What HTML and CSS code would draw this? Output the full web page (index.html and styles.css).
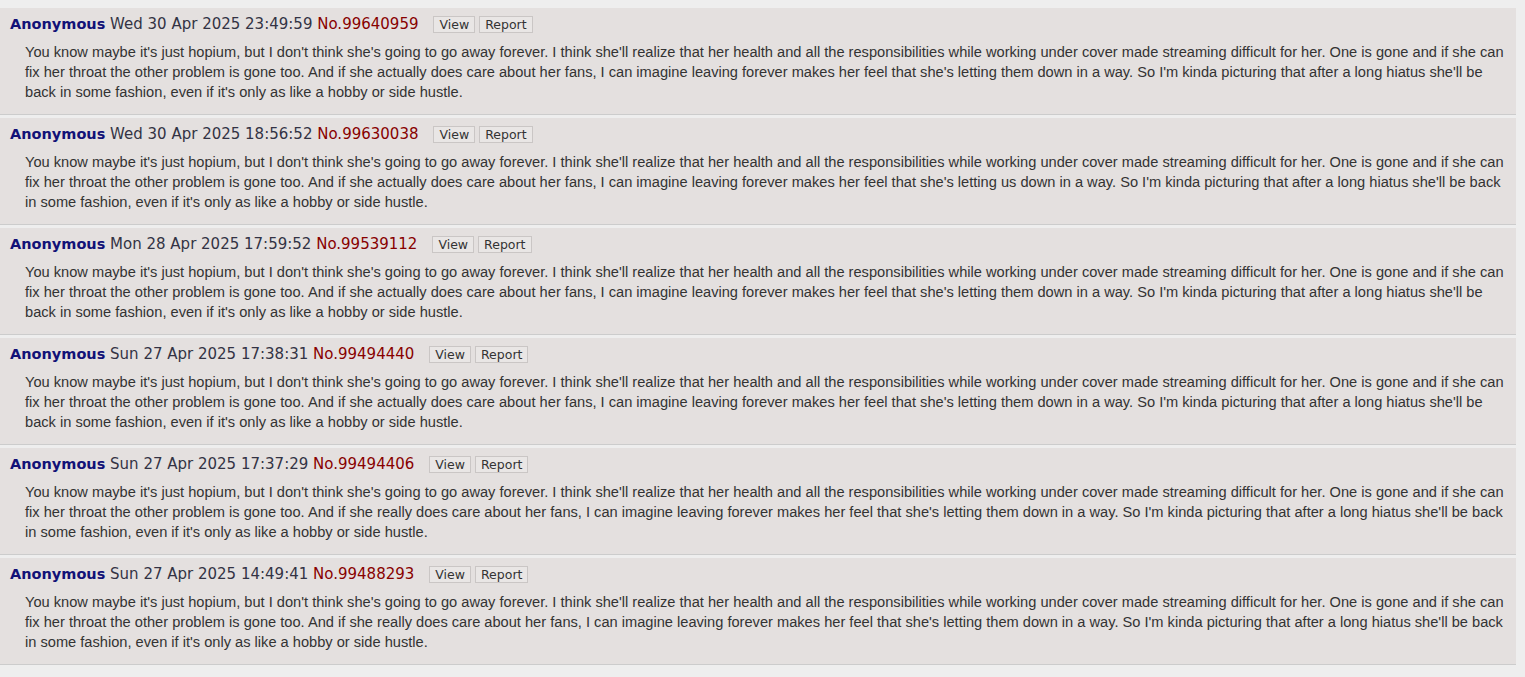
FILE: index.html
```html
<!DOCTYPE html>
<html>
<head>
<meta charset="utf-8">
<link rel="stylesheet" href="styles.css">
</head>
<body>
<div class="posts">
  <article class="post">
    <div class="post-head"><span class="name">Anonymous</span> <span class="date">Wed 30 Apr 2025 23:49:59</span> <span class="num">No.99640959</span><span class="btns"><span class="btn">View</span><span class="btn">Report</span></span></div>
    <div class="post-body">You know maybe it's just hopium, but I don't think she's going to go away forever. I think she'll realize that her health and all the responsibilities while working under cover made streaming difficult for her. One is gone and if she can fix her throat the other problem is gone too. And if she actually does care about her fans, I can imagine leaving forever makes her feel that she's letting them down in a way. So I'm kinda picturing that after a long hiatus she'll be back in some fashion, even if it's only as like a hobby or side hustle.</div>
  </article>
  <article class="post">
    <div class="post-head"><span class="name">Anonymous</span> <span class="date">Wed 30 Apr 2025 18:56:52</span> <span class="num">No.99630038</span><span class="btns"><span class="btn">View</span><span class="btn">Report</span></span></div>
    <div class="post-body">You know maybe it's just hopium, but I don't think she's going to go away forever. I think she'll realize that her health and all the responsibilities while working under cover made streaming difficult for her. One is gone and if she can fix her throat the other problem is gone too. And if she actually does care about her fans, I can imagine leaving forever makes her feel that she's letting us down in a way. So I'm kinda picturing that after a long hiatus she'll be back in some fashion, even if it's only as like a hobby or side hustle.</div>
  </article>
  <article class="post">
    <div class="post-head"><span class="name">Anonymous</span> <span class="date">Mon 28 Apr 2025 17:59:52</span> <span class="num">No.99539112</span><span class="btns"><span class="btn">View</span><span class="btn">Report</span></span></div>
    <div class="post-body">You know maybe it's just hopium, but I don't think she's going to go away forever. I think she'll realize that her health and all the responsibilities while working under cover made streaming difficult for her. One is gone and if she can fix her throat the other problem is gone too. And if she actually does care about her fans, I can imagine leaving forever makes her feel that she's letting them down in a way. So I'm kinda picturing that after a long hiatus she'll be back in some fashion, even if it's only as like a hobby or side hustle.</div>
  </article>
  <article class="post">
    <div class="post-head"><span class="name">Anonymous</span> <span class="date">Sun 27 Apr 2025 17:38:31</span> <span class="num">No.99494440</span><span class="btns"><span class="btn">View</span><span class="btn">Report</span></span></div>
    <div class="post-body">You know maybe it's just hopium, but I don't think she's going to go away forever. I think she'll realize that her health and all the responsibilities while working under cover made streaming difficult for her. One is gone and if she can fix her throat the other problem is gone too. And if she actually does care about her fans, I can imagine leaving forever makes her feel that she's letting them down in a way. So I'm kinda picturing that after a long hiatus she'll be back in some fashion, even if it's only as like a hobby or side hustle.</div>
  </article>
  <article class="post">
    <div class="post-head"><span class="name">Anonymous</span> <span class="date">Sun 27 Apr 2025 17:37:29</span> <span class="num">No.99494406</span><span class="btns"><span class="btn">View</span><span class="btn">Report</span></span></div>
    <div class="post-body">You know maybe it's just hopium, but I don't think she's going to go away forever. I think she'll realize that her health and all the responsibilities while working under cover made streaming difficult for her. One is gone and if she can fix her throat the other problem is gone too. And if she really does care about her fans, I can imagine leaving forever makes her feel that she's letting them down in a way. So I'm kinda picturing that after a long hiatus she'll be back in some fashion, even if it's only as like a hobby or side hustle.</div>
  </article>
  <article class="post">
    <div class="post-head"><span class="name">Anonymous</span> <span class="date">Sun 27 Apr 2025 14:49:41</span> <span class="num">No.99488293</span><span class="btns"><span class="btn">View</span><span class="btn">Report</span></span></div>
    <div class="post-body">You know maybe it's just hopium, but I don't think she's going to go away forever. I think she'll realize that her health and all the responsibilities while working under cover made streaming difficult for her. One is gone and if she can fix her throat the other problem is gone too. And if she really does care about her fans, I can imagine leaving forever makes her feel that she's letting them down in a way. So I'm kinda picturing that after a long hiatus she'll be back in some fashion, even if it's only as like a hobby or side hustle.</div>
  </article>
</div>
</body>
</html>
```
FILE: styles.css
```css
html, body {
  margin: 0;
  padding: 0;
  background: #eeeeee;
}
body {
  padding-top: 8px;
}
.posts {
  display: flex;
  flex-direction: column;
  gap: 3px;
  width: 1516px;
}
.post {
  background: #e4e0df;
  border-bottom: 1px solid #cccccc;
  padding: 6px 8px 12px 10px;
  box-sizing: border-box;
  height: 107px;
}
.post-head {
  font-family: "DejaVu Sans", Verdana, sans-serif;
  font-size: 15px;
  line-height: 20px;
  height: 20px;
  color: #333344;
  white-space: nowrap;
}
.name {
  font-weight: bold;
  font-size: 14.5px;
  color: #111177;
}
.num {
  color: #880000;
}
.btns {
  display: inline-flex;
  gap: 4px;
  margin-left: 15px;
  vertical-align: top;
  padding-top: 2px;
}
.btn {
  font-family: "DejaVu Sans", Verdana, sans-serif;
  font-size: 12.5px;
  line-height: 15px;
  padding: 0 5px;
  border: 1px solid #cac6c5;
  background: #e9e6e5;
  color: #333333;
}
.post-body {
  margin-top: 8px;
  padding-left: 15px;
  font-family: "Liberation Sans", Arial, sans-serif;
  font-size: 14.64px;
  line-height: 20px;
  color: #333333;
}
```
